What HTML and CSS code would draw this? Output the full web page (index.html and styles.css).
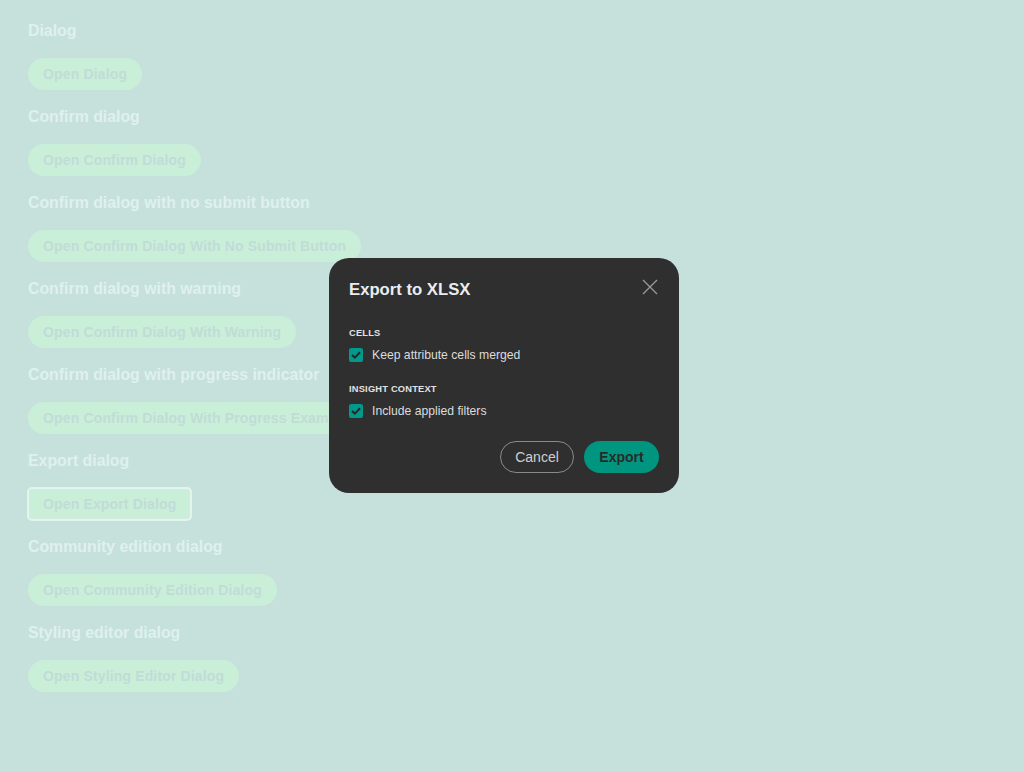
FILE: index.html
```html
<!DOCTYPE html>
<html>
<head>
<meta charset="utf-8">
<link rel="stylesheet" href="styles.css">
</head>
<body>
<main class="page">
  <section class="demo">
    <h3 class="demo-title">Dialog</h3>
    <button class="demo-btn">Open Dialog</button>
  </section>
  <section class="demo">
    <h3 class="demo-title">Confirm dialog</h3>
    <button class="demo-btn">Open Confirm Dialog</button>
  </section>
  <section class="demo">
    <h3 class="demo-title">Confirm dialog with no submit button</h3>
    <button class="demo-btn">Open Confirm Dialog With No Submit Button</button>
  </section>
  <section class="demo">
    <h3 class="demo-title">Confirm dialog with warning</h3>
    <button class="demo-btn">Open Confirm Dialog With Warning</button>
  </section>
  <section class="demo">
    <h3 class="demo-title">Confirm dialog with progress indicator</h3>
    <button class="demo-btn">Open Confirm Dialog With Progress Example</button>
  </section>
  <section class="demo">
    <h3 class="demo-title">Export dialog</h3>
    <button class="demo-btn focused">Open Export Dialog</button>
  </section>
  <section class="demo">
    <h3 class="demo-title">Community edition dialog</h3>
    <button class="demo-btn">Open Community Edition Dialog</button>
  </section>
  <section class="demo">
    <h3 class="demo-title">Styling editor dialog</h3>
    <button class="demo-btn">Open Styling Editor Dialog</button>
  </section>
</main>

<div class="dialog" role="dialog">
  <div class="dialog-head">
    <h2 class="dialog-title">Export to XLSX</h2>
    <button class="dialog-close" aria-label="Close">
      <svg width="16" height="16" viewBox="0 0 16 16"><path d="M1 1 L15 15 M15 1 L1 15" stroke="#9a9a9a" stroke-width="1.3" fill="none"/></svg>
    </button>
  </div>
  <div class="group">
    <div class="group-label">CELLS</div>
    <label class="check">
      <span class="box"><svg width="10" height="8" viewBox="0 0 10 8"><path d="M1 4 L3.8 6.6 L9 1.2" stroke="#1f2a29" stroke-width="2" fill="none"/></svg></span>
      <span>Keep attribute cells merged</span>
    </label>
  </div>
  <div class="group">
    <div class="group-label">INSIGHT CONTEXT</div>
    <label class="check">
      <span class="box"><svg width="10" height="8" viewBox="0 0 10 8"><path d="M1 4 L3.8 6.6 L9 1.2" stroke="#1f2a29" stroke-width="2" fill="none"/></svg></span>
      <span>Include applied filters</span>
    </label>
  </div>
  <div class="dialog-foot">
    <button class="btn-cancel">Cancel</button>
    <button class="btn-export">Export</button>
  </div>
</div>
</body>
</html>
```

FILE: styles.css
```css
html, body {
  margin: 0;
  padding: 0;
}
body {
  background: #c6e0dc;
  font-family: "Liberation Sans", Arial, sans-serif;
  width: 1024px;
  height: 772px;
  overflow: hidden;
  position: relative;
}
.page {
  padding: 20px 28px;
  display: flex;
  flex-direction: column;
  gap: 16px;
}
.demo {
  display: flex;
  flex-direction: column;
  align-items: flex-start;
  gap: 17px;
}
.demo-title {
  margin: 0;
  padding-top: 1px;
  font-size: 15.85px;
  line-height: 20px;
  height: 21px;
  box-sizing: border-box;
  font-weight: 700;
  color: #dff1ee;
}
.demo-btn {
  height: 32px;
  padding: 0 15px;
  border: none;
  border-radius: 16px;
  background: #c9efd9;
  color: #c1dcd8;
  font-family: "Liberation Sans", Arial, sans-serif;
  font-size: 14px;
  letter-spacing: 0.15px;
  font-weight: 700;
  cursor: pointer;
}
.demo-btn.focused {
  border-radius: 4px;
  outline: 2px solid #e2f3f0;
  outline-offset: -1px;
  box-shadow: inset 0 0 0 2px #d2ecdc;
}

.dialog {
  position: absolute;
  left: 329px;
  top: 258px;
  width: 350px;
  box-sizing: border-box;
  padding: 21px 20px 20px;
  background: #2f2f2f;
  border-radius: 20px;
  color: #e6e6e6;
}
.dialog-head {
  display: flex;
  justify-content: space-between;
  align-items: flex-start;
  height: 44px;
  margin-bottom: 4px;
}
.dialog-title {
  margin: 0;
  font-size: 16.7px;
  line-height: 22px;
  font-weight: 700;
  color: #ececec;
}
.dialog-close {
  background: none;
  border: none;
  padding: 0;
  margin: 0 1px 0 0;
  width: 16px;
  height: 16px;
  cursor: pointer;
}
.dialog-close svg {
  display: block;
}
.group {
  display: flex;
  flex-direction: column;
  gap: 8px;
  margin-bottom: 20px;
}
.group + .group {
  margin-bottom: 22px;
}
.group-label {
  font-size: 9.3px;
  line-height: 12px;
  font-weight: 700;
  color: #e2e2e2;
  letter-spacing: 0.2px;
}
.check {
  display: flex;
  align-items: center;
  gap: 9px;
  font-size: 12.2px;
  line-height: 16px;
  color: #dcdcdc;
}
.box {
  width: 14px;
  height: 14px;
  border-radius: 2px;
  background: #00998a;
  display: flex;
  align-items: center;
  justify-content: center;
}
.box svg {
  display: block;
}
.dialog-foot {
  display: flex;
  justify-content: flex-end;
  gap: 10px;
}
.btn-cancel, .btn-export {
  height: 32px;
  border-radius: 16px;
  font-family: "Liberation Sans", Arial, sans-serif;
  font-size: 14px;
  cursor: pointer;
}
.btn-cancel {
  width: 74px;
  background: transparent;
  border: 1px solid #8a8a8a;
  color: #cfcfcf;
}
.btn-export {
  width: 75px;
  background: #00957f;
  border: none;
  color: #2a2a2a;
  font-weight: 700;
}
```
